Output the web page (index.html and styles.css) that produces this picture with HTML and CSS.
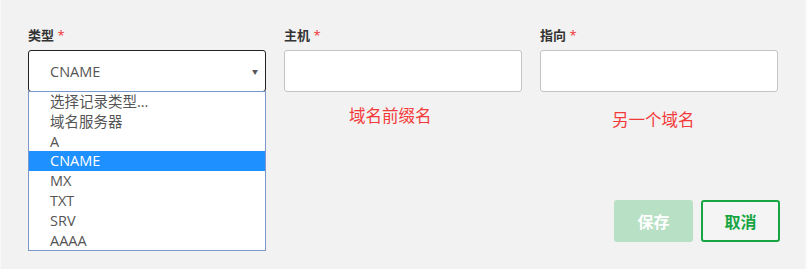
FILE: index.html
```html
<!DOCTYPE html>
<html lang="zh-CN">
<head>
    <meta charset="UTF-8">
    <meta name="viewport" content="width=device-width, initial-scale=1.0">
    <title>添加记录</title>
    <link rel="stylesheet" href="styles.css">
</head>
<body>
    <div class="panel">
        <div class="fields">
            <div class="field">
                <label>类型 <span class="req">*</span></label>
                <div class="select open">
                    <span class="value">CNAME</span>
                    <span class="caret">▼</span>
                    <ul class="options">
                        <li>选择记录类型...</li>
                        <li>域名服务器</li>
                        <li>A</li>
                        <li class="selected">CNAME</li>
                        <li>MX</li>
                        <li>TXT</li>
                        <li>SRV</li>
                        <li>AAAA</li>
                    </ul>
                </div>
            </div>
            <div class="field">
                <label>主机 <span class="req">*</span></label>
                <input type="text" class="input">
                <p class="hint hint-host">域名前缀名</p>
            </div>
            <div class="field">
                <label>指向 <span class="req">*</span></label>
                <input type="text" class="input">
                <p class="hint hint-target">另一个域名</p>
            </div>
        </div>
        <div class="actions">
            <button class="btn btn-save" disabled>保存</button>
            <button class="btn btn-cancel">取消</button>
        </div>
    </div>
</body>
</html>
```

FILE: styles.css
```css
* {
    margin: 0;
    padding: 0;
    box-sizing: border-box;
    font-family: "Open Sans", "Noto Sans CJK SC", sans-serif;
}
body {
    background-color: #f9f9f9;
}
.panel {
    margin: 0 2px 0 1px;
    height: 269px;
    background-color: #f2f2f2;
    padding: 25px 25px 0 27px;
}
.fields {
    display: grid;
    grid-template-columns: 238px 238px 238px;
    column-gap: 18px;
    height: 175px;
}
.field label {
    display: block;
    height: 20px;
    line-height: 20px;
    margin-bottom: 5px;
    font-size: 13px;
    font-weight: bold;
    color: #333;
}
.req {
    color: #e33;
    font-weight: normal;
}
.select {
    position: relative;
    height: 42px;
    border: 1px solid #222;
    border-radius: 3px;
    background-color: #fff;
    display: flex;
    align-items: center;
    padding-left: 21px;
}
.select .value {
    font-size: 14.5px;
    color: #555;
}
.select .caret {
    position: absolute;
    right: 7px;
    top: 16px;
    font-size: 6px;
    color: #555;
}
.options {
    list-style: none;
    position: absolute;
    left: -1px;
    right: -1px;
    top: 40px;
    background-color: #fff;
    border: 1px solid #7a98cc;
    z-index: 2;
}
.options li {
    height: 19.8px;
    line-height: 19.8px;
    padding-left: 21px;
    font-size: 14.5px;
    color: #555;
}
.options li.selected {
    background-color: #1e90ff;
    color: #fff;
}
.input {
    display: block;
    width: 100%;
    height: 42px;
    border: 1px solid #c4c4c4;
    border-radius: 3px;
    background-color: #fff;
}
.hint {
    font-size: 16.5px;
    line-height: 20px;
    color: #f23a3a;
}
.hint-host {
    margin-top: 14px;
    padding-left: 65px;
}
.hint-target {
    margin-top: 18px;
    padding-left: 72px;
}
.actions {
    display: flex;
    justify-content: flex-end;
    gap: 8px;
}
.btn {
    width: 79px;
    height: 42px;
    border-radius: 3px;
    font-size: 16px;
    font-weight: bold;
}
.btn-save {
    border: none;
    background-color: #b8e0c5;
    color: #fff;
}
.btn-cancel {
    border: 2px solid #17a544;
    background-color: #f4f4f4;
    color: #17a544;
    cursor: pointer;
}
```
